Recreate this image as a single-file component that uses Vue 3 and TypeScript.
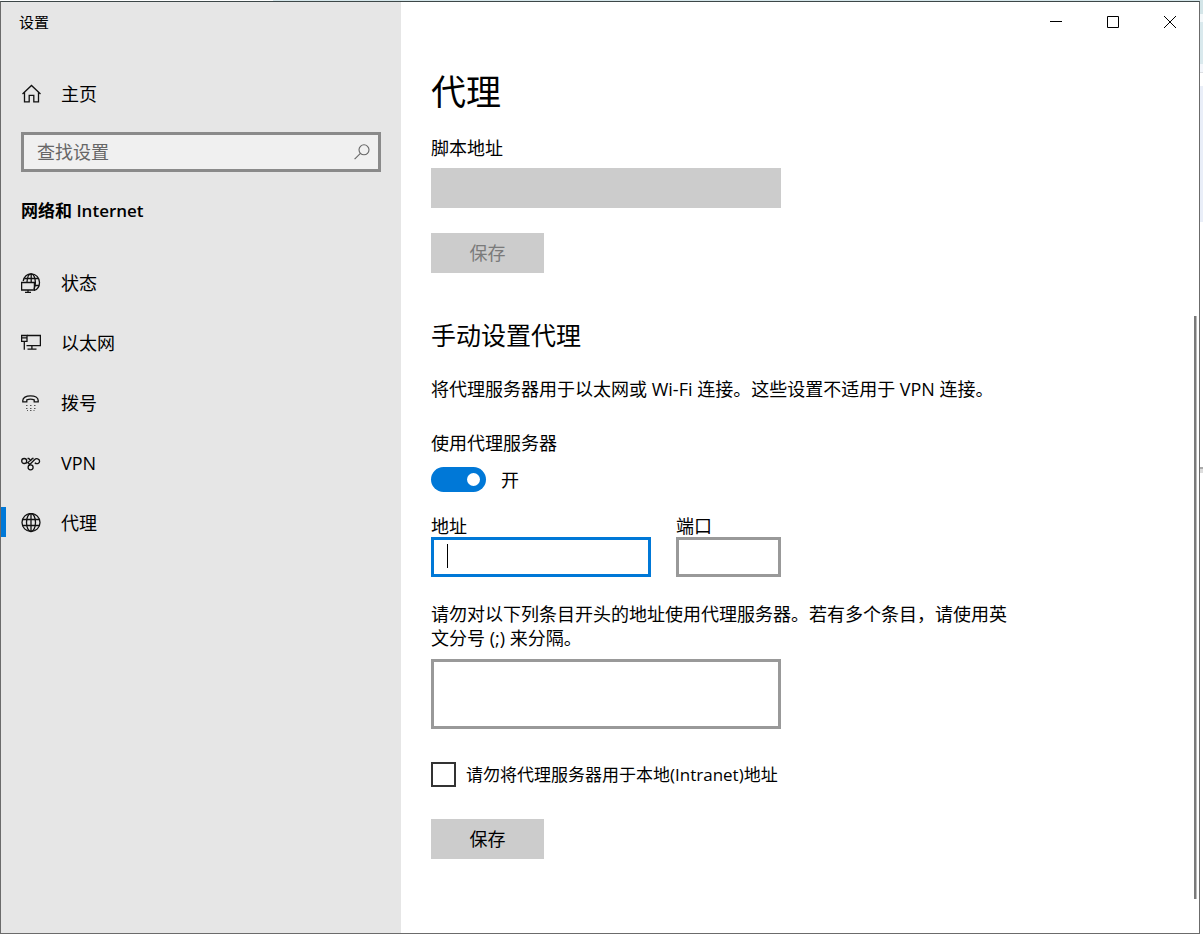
<script setup lang="ts">
import { ref } from 'vue'

interface NavItem {
  id: string
  label: string
}

const navItems: NavItem[] = [
  { id: 'status', label: '状态' },
  { id: 'ethernet', label: '以太网' },
  { id: 'dialup', label: '拨号' },
  { id: 'vpn', label: 'VPN' },
  { id: 'proxy', label: '代理' },
]

const active = ref('proxy')
const search = ref('')
const script = ref('')
const useProxy = ref(true)
const address = ref('')
const port = ref('')
const exceptions = ref('')
const bypassLocal = ref(false)
</script>

<template>
  <div class="desktop">
    <div class="window">
      <aside class="sidebar">
        <div class="app-title">设置</div>
        <a class="home" href="#home">
          <svg class="icon" width="20" height="20" viewBox="0 0 20 20">
            <path d="M1.500 10 10.500 1.500l9 8.500M3.500 8.300v9.600h4.700v-6.600h4.600v6.600h4.700V8.300" />
          </svg>
          <span>主页</span>
        </a>
        <div class="search">
          <input v-model="search" type="text" placeholder="查找设置" aria-label="查找设置" />
          <svg class="icon lens" width="16" height="16" viewBox="0 0 16 16">
            <circle cx="10" cy="5.8" r="5" />
            <path d="M6.4 9.4.6 15.2" />
          </svg>
        </div>
        <h2 class="group">网络和 Internet</h2>
        <nav>
          <a
            v-for="item in navItems"
            :key="item.id"
            :href="'#' + item.id"
            class="nav-item"
            :class="{ active: item.id === active }"
            @click.prevent="active = item.id"
          >
            <svg v-if="item.id === 'status'" class="icon" width="20" height="20" viewBox="0 0 20 20">
              <path d="M2.2 8C3.2 3.6 6.4.9 10.2.9c4.7 0 8.3 3.8 8.3 8.5 0 4-2.4 7.1-5.5 8.1" />
              <path d="M3.5 5.500h14M14 12.500h4M6 9C6.3 4.500 8 .9 10.200.9c2.400 0 4.200 4 4.200 8.600 0 2.500-.5 4.800-1.400 6.500M10.200 1v8" />
              <path d="M.6 9.500h12.800v7.500H.6zM7 17v2.400M4 19.400h6" />
            </svg>
            <svg v-else-if="item.id === 'ethernet'" class="icon" width="20" height="20" viewBox="0 0 20 20">
              <path d="M6 2.500h13.400v10.200H5.500M10.900 12.700v3.300M6.500 16.200h9" />
              <path d="M.6 2.500H6v5.800H.6zM.6 4.800H6M3.300 8.300v8.500" />
            </svg>
            <svg v-else-if="item.id === 'dialup'" class="icon" width="20" height="20" viewBox="0 0 20 20">
              <path d="M1.800 8.800V7.500C1.800 4.700 5 2.800 9.500 2.800s7.700 1.900 7.700 4.700v1.300h-4V6.900c-2.200-1-5.200-1-7.400 0v1.900z" />
              <path class="dots" d="M5 12.500h1.500M9 12.500h1.500M13 12.500h1.500M5 15.500h1.500M9 15.500h1.500M13 15.500h1.500M6 17.500h1M9 17.500h1.500M12.500 17.500h1" />
            </svg>
            <svg v-else-if="item.id === 'vpn'" class="icon" width="20" height="20" viewBox="0 0 20 20">
              <circle cx="3.200" cy="8" r="2.500" />
              <circle cx="9.600" cy="14.300" r="2.500" />
              <path d="M4.900 9.800c1.700.7 2.700-.6 3.800-2M6.500 5.500h1.300l1.800 2 1.800-2h1.200M7.500 12.800l6-6.100c1.700-1.800 5.100-1 5.100 1.500 0 2.400-3 3.300-4.800 1.500M6.900 9.500l1.500 1.500" />
            </svg>
            <svg v-else class="icon" width="20" height="20" viewBox="0 0 20 20">
              <circle cx="10" cy="9.500" r="9" />
              <ellipse cx="10" cy="9.500" rx="4.500" ry="9" />
              <path d="M10 .5v18M1.700 6.500h16.600M1.700 12.500h16.600" />
            </svg>
            <span>{{ item.label }}</span>
          </a>
        </nav>
      </aside>

      <main class="main">
        <header class="caption">
          <button type="button" aria-label="最小化">
            <svg width="12" height="12" viewBox="0 0 12 12"><path d="M0 5.500h12" /></svg>
          </button>
          <button type="button" aria-label="最大化">
            <svg width="12" height="12" viewBox="0 0 12 12"><path d="M.5.5h11v11H.5z" /></svg>
          </button>
          <button type="button" aria-label="关闭">
            <svg width="12" height="12" viewBox="0 0 12 12"><path d="M0 0l12 12M12 0 0 12" /></svg>
          </button>
        </header>

        <form class="content" @submit.prevent>
          <h1>代理</h1>
          <label class="script-label" for="script">脚本地址</label>
          <input id="script" v-model="script" class="box script-input" type="text" disabled />
          <button class="save" type="button" disabled>保存</button>

          <h2>手动设置代理</h2>
          <p class="intro">将代理服务器用于以太网或 Wi-Fi 连接。这些设置不适用于 VPN 连接。</p>

          <label class="switch-label" for="use-proxy">使用代理服务器</label>
          <div class="switch-row">
            <input id="use-proxy" v-model="useProxy" class="switch" type="checkbox" role="switch" />
            <span>{{ useProxy ? '开' : '关' }}</span>
          </div>

          <div class="pair">
            <div class="field address">
              <label for="address">地址</label>
              <div class="caret-host">
                <input id="address" v-model="address" class="box focused" type="text" />
                <span v-if="!address" class="caret"></span>
              </div>
            </div>
            <div class="field port">
              <label for="port">端口</label>
              <input id="port" v-model="port" class="box" type="text" />
            </div>
          </div>

          <label class="note" for="exceptions">请勿对以下列条目开头的地址使用代理服务器。若有多个条目，请使用英文分号 (;) 来分隔。</label>
          <textarea id="exceptions" v-model="exceptions" class="box area"></textarea>

          <label class="check">
            <input v-model="bypassLocal" type="checkbox" />
            <span>请勿将代理服务器用于本地(Intranet)地址</span>
          </label>
          <button class="save" type="submit">保存</button>
        </form>
      </main>
      <div class="rail"></div>
    </div>
  </div>
</template>

<style>
body {
  margin: 0;
}
</style>

<style scoped>
* {
  box-sizing: border-box;
}
.desktop {
  min-height: 100vh;
  display: flex;
  padding: 1px 3px 2px 0;
  font-family: "Open Sans", "Noto Sans CJK SC", sans-serif;
  font-size: 18px;
  line-height: 24px;
  color: #000;
  background:
    linear-gradient(#d3e5e8 0 14px, #f3f8fa 14px 22px, #d9e9ed 22px 64px, #f3f6fb 64px 72px, #dcdfe3 72px 73px, #fff 73px 86px, #e9eef8 86px 222px, #fff 222px 467px, #aaa 467px 469px, #ddd 469px 473px, #fff 473px) right / 3px 100% no-repeat,
    linear-gradient(90deg, #fbfdfd 0 273px, #d5e6ea 273px) top / 100% 1px no-repeat,
    #fff;
}
.window {
  flex: 1;
  position: relative;
  display: flex;
  border: 1px solid #6b6b6b;
  border-top-color: #3d4748;
  background: #fff;
}
h1,
h2,
p {
  margin: 0;
  font-weight: 400;
}
input,
textarea,
button {
  font: inherit;
  color: inherit;
  margin: 0;
  border-radius: 0;
  outline: none;
}
a {
  color: inherit;
  text-decoration: none;
}
.icon {
  flex: none;
  fill: none;
  stroke: #111;
  stroke-width: 1.3;
}
.sidebar {
  flex: none;
  width: 400px;
  background: #e6e6e6;
}
.app-title {
  padding: 8px 18px 0;
  font-size: 15px;
}
.home {
  display: flex;
  align-items: center;
  gap: 20px;
  height: 60px;
  margin-top: 30px;
  padding-left: 20px;
}
.search {
  display: flex;
  align-items: center;
  height: 40px;
  margin: 8px 20px 0;
  padding: 0 8px 0 13px;
  border: 3px solid #8a8a8a;
  background: #f0f0f0;
}
.search input {
  flex: 1;
  min-width: 0;
  padding: 0;
  border: 0;
  background: none;
}
.search input::placeholder {
  color: #666;
  opacity: 1;
}
.lens {
  stroke: #666;
  stroke-width: 1.1;
}
.group {
  margin: 27px 20px 30px;
  font-size: 17px;
  font-weight: 600;
}
.nav-item {
  position: relative;
  display: flex;
  align-items: center;
  gap: 20px;
  height: 60px;
  padding-left: 20px;
}
.nav-item.active::before {
  content: "";
  position: absolute;
  left: 0;
  top: 14px;
  width: 5px;
  height: 30px;
  background: #0078d7;
}
.dots {
  stroke: #555;
  stroke-width: 1;
}
.main {
  flex: 1;
  min-width: 0;
}
.caption {
  display: flex;
  justify-content: flex-end;
  height: 40px;
  padding-right: 1px;
}
.caption button {
  display: flex;
  align-items: center;
  justify-content: center;
  width: 57px;
  padding: 0;
  border: 0;
  background: none;
}
.caption svg {
  fill: none;
  stroke: #000;
}
.content {
  display: flex;
  flex-direction: column;
  align-items: flex-start;
  max-width: 640px;
  padding: 30px 30px 40px;
}
h1 {
  font-size: 35px;
  line-height: 40px;
}
.script-label {
  margin-top: 24px;
}
.box {
  display: block;
  width: 100%;
  height: 40px;
  padding: 0 12px;
  border: 3px solid #999;
  background: #fff;
}
.script-input {
  max-width: 350px;
  margin-top: 8px;
  border-color: #ccc;
  background: #ccc;
}
.save {
  width: 113px;
  height: 40px;
  margin-top: 25px;
  padding: 0;
  border: 0;
  background: #ccc;
}
.save:disabled {
  color: #7a7a7a;
}
.content h2 {
  margin-top: 44px;
  font-size: 25px;
  line-height: 36px;
}
.intro {
  margin-top: 24px;
}
.switch-label {
  margin-top: 30px;
}
.switch-row {
  display: flex;
  align-items: center;
  gap: 15px;
  margin-top: 12px;
  height: 25px;
}
.switch {
  appearance: none;
  width: 55px;
  height: 25px;
  padding: 6px;
  border-radius: 13px;
  background: #777;
  display: flex;
}
.switch::before {
  content: "";
  width: 13px;
  height: 13px;
  border-radius: 50%;
  background: #fff;
}
.switch:checked {
  justify-content: flex-end;
  background: #0078d7;
}
.pair {
  display: flex;
  gap: 25px;
  width: 100%;
  max-width: 350px;
  margin-top: 23px;
}
.field label {
  display: block;
  line-height: 22px;
}
.address {
  flex: 1;
}
.port {
  width: 105px;
}
.caret-host {
  position: relative;
}
.focused {
  border-color: #0078d7;
}
.caret {
  position: absolute;
  left: 16px;
  top: 7px;
  width: 1px;
  height: 24px;
  background: #000;
}
.note {
  margin-top: 25px;
}
.area {
  max-width: 350px;
  height: 70px;
  margin-top: 9px;
  resize: none;
}
.check {
  display: flex;
  align-items: center;
  gap: 10px;
  margin-top: 33px;
  font-size: 17px;
}
.check input {
  appearance: none;
  width: 25px;
  height: 25px;
  border: 2px solid #333;
  background: #fff;
}
.check input:checked {
  background: #0078d7;
}
.check + .save {
  margin-top: 32px;
}
.rail {
  position: absolute;
  right: 2px;
  top: 314px;
  bottom: 34px;
  width: 3px;
  background: #7a7a7a;
  border-right: 1px solid #bbb;
}
</style>
